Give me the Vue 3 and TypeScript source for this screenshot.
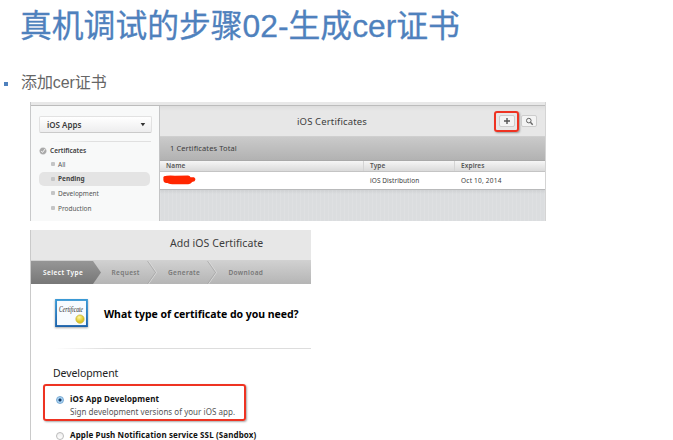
<script setup lang="ts">
interface NavItem { label: string; active: boolean }
interface Step { label: string; cls: string }

const navItems: NavItem[] = [
  { label: 'All', active: false },
  { label: 'Pending', active: true },
  { label: 'Development', active: false },
  { label: 'Production', active: false },
]
const steps: Step[] = [
  { label: 'Select Type', cls: 'current' },
  { label: 'Request', cls: 'request' },
  { label: 'Generate', cls: 'generate' },
  { label: 'Download', cls: 'download' },
]
</script>

<template>
  <main class="slide">
    <h1>真机调试的步骤02-生成cer证书</h1>
    <div class="bullet"><i></i><span>添加cer证书</span></div>

    <section class="portal">
      <div class="topstrip"></div>
      <div class="columns">
        <aside>
          <div class="select"><span>iOS Apps</span>
            <svg width="6" height="5" viewBox="0 0 6 5"><path d="M.6 1h4.600L2.900 4.200z" fill="#333" /></svg>
          </div>
          <hr />
          <div class="group">
            <svg width="8" height="8" viewBox="0 0 9 9">
              <circle cx="4.5" cy="4.5" r="3.6" fill="#aaa" stroke="#aaa" stroke-width=".8" stroke-dasharray="1 .6" />
              <path d="M2.5 4.5l1.5 1.6 2.8-3.8" fill="none" stroke="#fff" stroke-width="1" />
            </svg>
            <span>Certificates</span>
          </div>
          <div v-for="item in navItems" :key="item.label" class="nav" :class="{ active: item.active }">
            <i></i><span>{{ item.label }}</span>
          </div>
        </aside>
        <div class="content">
          <header>
            <span class="heading">iOS Certificates</span>
            <div class="marked"><div class="tool">
              <svg width="8" height="8" viewBox="0 0 8 8"><path d="M4 1v6M1 4h6" stroke="#555" stroke-width="1.400" /></svg>
            </div></div>
            <div class="tool search">
              <svg width="9" height="9" viewBox="0 0 9 9"><circle cx="3.8" cy="3.6" r="2.300" fill="none" stroke="#666" /><path d="M5.400 5.300L7.700 7.700" stroke="#666" stroke-width="1.400" /></svg>
            </div>
          </header>
          <div class="total"><span>1 Certificates Total</span></div>
          <div class="row thead"><span>Name</span><span>Type</span><span>Expires</span></div>
          <div class="row tbody">
            <span><svg class="scribble" width="33" height="11" viewBox="0 0 33 11"><path d="M1 1.2Q5 .1 12 .7L25 .6Q27 .8 27.500 2.200L31 2.300Q33.500 4 31.500 6.200L29 6.900Q28 9.200 23 9.300H12Q6 9.200 4.500 8Q1 8 .6 6Q.2 4.800.4 3.200Q0 2 1 1.200z" fill="#ff2600" /></svg></span>
            <span class="d-type">iOS Distribution</span><span class="d-exp">Oct 10, 2014</span>
          </div>
          <div class="linen"></div>
        </div>
      </div>
    </section>

    <section class="wizard">
      <header><span>Add iOS Certificate</span></header>
      <div class="steps">
        <div v-for="(step, index) in steps" :key="step.label" class="step" :class="step.cls">
          <span>{{ step.label }}</span>
          <svg v-if="index > 0 && index < 3" width="10" height="23" viewBox="0 0 10 23">
            <path d="M1.500 0L9.500 11.500L1.500 23" fill="none" stroke="#dedede" stroke-width=".8" />
            <path d="M.5 0L8.500 11.500L.5 23" fill="none" stroke="#a2a2a2" stroke-width=".7" />
          </svg>
        </div>
      </div>
      <div class="question">
        <div class="badge">
          <svg width="33" height="28" viewBox="0 0 34 29">
            <defs>
              <linearGradient id="frame" x1="0" y1="0" x2="0" y2="1"><stop offset="0" stop-color="#3b9ad6" /><stop offset="1" stop-color="#1c62ab" /></linearGradient>
              <radialGradient id="seal" cx=".4" cy=".3"><stop offset="0" stop-color="#fff79d" /><stop offset="1" stop-color="#ddc72c" /></radialGradient>
            </defs>
            <rect width="34" height="29" fill="url(#frame)" />
            <rect x="2" y="2" width="30" height="25" fill="#f7fbff" />
            <text x="4" y="13.500" textLength="25" lengthAdjust="spacingAndGlyphs">Certificate</text>
            <circle cx="25.800" cy="20.800" r="4.300" fill="url(#seal)" stroke="#c3ad25" stroke-width=".7" />
          </svg>
        </div>
        <span>What type of certificate do you need?</span>
      </div>
      <hr />
      <h2>Development</h2>
      <div class="option chosen">
        <i class="radio on"></i>
        <div><b class="o1">iOS App Development</b><p>Sign development versions of your iOS app.</p></div>
      </div>
      <div class="option next">
        <i class="radio"></i>
        <b class="o2">Apple Push Notification service SSL (Sandbox)</b>
      </div>
    </section>
  </main>
</template>

<style>
body { background: #fff; overflow: hidden; }
</style>

<style scoped>
* { box-sizing: border-box; }
.slide { width: 673px; height: 440px; overflow: hidden; display: flex; flex-direction: column; background: #fff; font-family: "Noto Sans", "Open Sans", sans-serif; color: #3c3c3c; }
span, b, p { white-space: nowrap; }
svg { display: block; flex: none; overflow: visible; }
h1 { margin: 6px 0 0 20px; height: 40px; font: 400 31.8px/40px "Liberation Sans", "Noto Sans CJK SC", sans-serif; color: #4f81bd; -webkit-text-stroke: .3px #4f81bd; }
.bullet { display: flex; align-items: center; height: 24px; margin: 25px 0 0 4px; font: 400 16px/24px "Liberation Sans", "Noto Sans CJK SC", sans-serif; color: #666; }
.bullet i { width: 4px; height: 4px; background: #4f81bd; margin: 2px 13px 0 0; }
.bullet span { letter-spacing: -.1px; }
.portal { width: 516px; height: 119px; margin: 7px 0 0 30px; flex: none; overflow: hidden; border-left: 1px solid #c8c9ca; border-right: 1px solid #d4d4d4; }
.topstrip { height: 4px; background: #e8e8e8; border-bottom: 1px solid #bcbcbc; }
.columns { display: flex; height: 115px; }
aside { width: 128px; flex: none; background: #f8f9f9; padding: 10px 8px 0; }
.select { display: flex; align-items: center; justify-content: space-between; width: 113px; height: 17px; padding: 0 5px 0 7px; border: 1px solid #e2e2e2; border-bottom-color: #cacaca; border-radius: 2px; background: linear-gradient(#fff, #ededee); font-size: 8px; font-weight: 600; line-height: 15px; }
hr { border: 0; height: 1px; margin: 0; background: linear-gradient(90deg, transparent, #e0e0e0 40%, #e0e0e0); }
aside hr { margin: 8px 0 5px 12px; }
.group { display: flex; align-items: center; gap: 3px; height: 7px; font-size: 6.5px; font-weight: 600; margin-bottom: 3px; }
.nav { display: flex; align-items: center; height: 14.6px; padding-left: 12px; gap: 3px; width: 111px; font-size: 6.5px; color: #555; }
.nav i { width: 4px; height: 4px; border-radius: 1px; background: #c4c5c6; }
.nav.active { background: #e4e4e4; border-radius: 5px; font-weight: 700; color: #444; }
.content { flex: 1; display: flex; flex-direction: column; border-left: 1px solid #c4c5c6; }
.content header { height: 31px; flex: none; display: flex; align-items: center; background: linear-gradient(#dddddd, #e7e7e7 5px); padding-left: 137px; border-bottom: 1px solid #cfcfcf; }
.heading { width: 197px; font-size: 9.5px; letter-spacing: .14px; }
.marked { width: 25px; height: 21px; flex: none; border: 2px solid #ee3322; border-radius: 3px; box-shadow: 1px 1px 2px #999; display: grid; place-items: center; }
.tool { width: 16px; height: 12px; display: grid; place-items: center; border: 1px solid #cdcdcd; border-radius: 2px; background: #f4f4f4; }
.search { margin-left: 2px; }
.total { height: 24px; flex: none; background: linear-gradient(#cacaca, #b2b2b2); border-bottom: 1px solid #a9a9a9; padding-left: 10px; font-size: 7.5px; line-height: 22px; letter-spacing: .1px; }
.row { display: grid; grid-template-columns: 204px 91px 1fr; align-items: center; flex: none; font-size: 6.5px; }
.thead { height: 11px; background: linear-gradient(#f6f6f6, #dadada); border-bottom: 1px solid #c4c4c4; font-weight: 600; color: #555; line-height: 10px; letter-spacing: .1px; }
.thead span { padding-left: 6px; border-right: 1px solid #d4d4d4; }
.thead span:last-child { border: 0; }
.tbody { height: 18px; background: #fff; border-bottom: 1px solid #b9babb; }
.tbody span { padding-left: 6px; letter-spacing: .07px; }
.tbody .d-exp { letter-spacing: .22px; }
.tbody span:first-child { padding-left: 3px; }
.linen { flex: 1; background: repeating-linear-gradient(90deg, rgba(255,255,255,.1) 0 1px, transparent 1px 4px), linear-gradient(#cfd1d3, #dbdddf 4px); }
.wizard { width: 281px; height: 210px; flex: none; margin: 9px 0 0 30px; border-left: 1px solid #cacaca; display: flex; flex-direction: column; }
.wizard header { height: 31px; flex: none; background: #e7e7e7; padding: 3px 0 0 139px; font-size: 10.5px; line-height: 20px; border-bottom: 1px solid #d1d1d1; letter-spacing: .06px; }
.steps { height: 23px; flex: none; display: flex; background: linear-gradient(#d0d0d0, #b5b5b5); font-size: 6.5px; font-weight: 600; line-height: 23px; color: #777; letter-spacing: .36px; }
.step { display: flex; justify-content: space-between; }
.current { width: 70px; padding-left: 12px; color: #fff; background: linear-gradient(#969696, #777); clip-path: polygon(0 0, 62px 0, 100% 50%, 62px 100%, 0 100%); letter-spacing: .43px; }
.request { width: 56px; padding-left: 10.5px; }
.generate { width: 60px; padding-left: 11px; }
.download { padding-left: 11.5px; }
.question { display: flex; align-items: center; height: 29px; margin: 14px 0 0 24px; flex: none; font-size: 10.5px; font-weight: 700; color: #000; letter-spacing: -.03px; }
.question > span { margin: 3px 0 0 16px; }
.badge { width: 33px; box-shadow: 0 1px 2px #aaa; }
.badge text { font: italic 8px "Liberation Serif", serif; fill: #222; letter-spacing: 0; }
.wizard hr { flex: none; margin: 21px 0 0 24px; background: linear-gradient(90deg, transparent, #ddd 20%, #ddd); }
h2 { flex: none; margin: 15px 0 0 22px; font-size: 10.5px; line-height: 18px; font-weight: 400; color: #222; letter-spacing: -.08px; }
.option { flex: none; display: flex; font-size: 8px; line-height: 12px; color: #111; }
.chosen { width: 203px; height: 37px; margin: 2px 0 0 12px; border: 2px solid #ee3322; border-radius: 3px; padding: 7px 0 0 11px; box-shadow: 1px 1px 2px #aaa; }
.radio { width: 8px; height: 8px; flex: none; border: 1px solid #bbb; border-radius: 50%; margin: 3px 6px 0 0; background: linear-gradient(#eee, #fff); }
.radio.on { border-color: #79a9d2; background: radial-gradient(circle, #173b66 0 1.300px, #a8d4f5 1.800px); }
.option p { margin: 0; color: #555; line-height: 13px; letter-spacing: .035px; }
.o1 { letter-spacing: .14px; }
.o2 { letter-spacing: .11px; }
.next { margin: 8px 0 0 25px; }
</style>
